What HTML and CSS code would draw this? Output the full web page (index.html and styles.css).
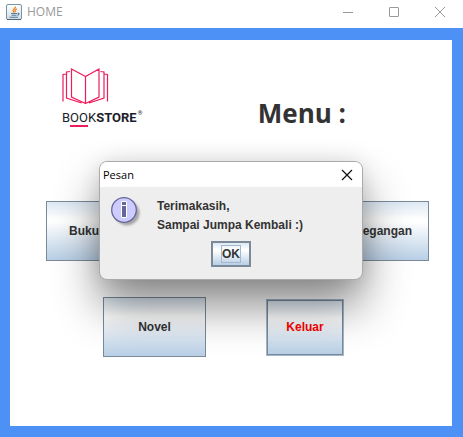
FILE: index.html
```
<!DOCTYPE html>
<html lang="id">
<head>
<meta charset="utf-8">
<meta name="viewport" content="width=device-width, initial-scale=1">
<title>HOME</title>
<link rel="stylesheet" href="styles.css">
</head>
<body>
<header class="titlebar">
  <svg class="app-icon" width="16" height="16" viewBox="0 0 16 16" aria-hidden="true">
    <defs><linearGradient id="tile" x1="0" y1="0" x2="0" y2="1"><stop offset="0" stop-color="#fff"/><stop offset="1" stop-color="#d3dde5"/></linearGradient></defs>
    <rect x=".5" y=".5" width="15" height="15" rx="1.5" fill="url(#tile)" stroke="#7893a6"/>
    <path d="M1 15.5h14" stroke="#48677f"/>
    <path d="M9.4 2.5c.7 2-3.4 2.7-2.2 4.6l.8 1.4M10.8 4.8C8.6 5.8 8.6 6.6 9.2 8.3" fill="none" stroke="#ee8420" stroke-width="1.3"/>
    <path d="M5 9.500h6M5.500 11.300h5M3.500 13.200h8.500M11.500 9.300c2-.6 2 1.500-.2 2" fill="none" stroke="#527b98" stroke-width="1.1"/>
  </svg>
  <span class="app-name">HOME</span>
  <div class="controls">
    <button type="button" class="control" aria-label="Minimize"><svg width="12" height="12" viewBox="0 0 12 12"><path d="M1 6.500h10"/></svg></button>
    <button type="button" class="control" aria-label="Maximize"><svg width="12" height="12" viewBox="0 0 12 12"><rect x="1.500" y="1.500" width="9" height="9" rx=".5"/></svg></button>
    <button type="button" class="control" aria-label="Close"><svg width="12" height="12" viewBox="0 0 12 12"><path d="M1 1l10 10M11 1L1 11"/></svg></button>
  </div>
</header>
<main class="frame">
  <div class="panel">
    <div class="heading">
      <div class="brand">
        <svg class="book" width="48" height="36" viewBox="0 0 48 36" aria-hidden="true">
          <path d="M23.500 8.500L9.500 1v28l14 6.500 13.500-6.500V1zM23.500 8.500v27M8 3.500l-3.500.5V30l15 5M38.500 3.500l3.500.5V30l-15 5M4 6l-3 .5V33.500M42.500 6l3 .5V33.500"/>
        </svg>
        <div class="wordmark"><span class="light">B<span class="underlined">OO</span>K</span><b>STORE</b><span class="reg">®</span></div>
      </div>
      <h1>Menu :</h1>
    </div>
    <div class="row row-top">
      <button type="button" class="tile tile-start">Buku</button>
      <button type="button" class="tile tile-end">Pegangan</button>
    </div>
    <div class="row row-bottom">
      <button type="button" class="tile">Novel</button>
      <button type="button" class="tile tile-exit">Keluar</button>
    </div>
  </div>
</main>
<section class="dialog" role="dialog" aria-labelledby="dialog-title">
  <header class="dialog-bar">
    <h2 id="dialog-title">Pesan</h2>
    <button type="button" class="dialog-close" aria-label="Close"><svg width="12" height="12" viewBox="0 0 12 12"><path d="M1 1l10 10M11 1L1 11"/></svg></button>
  </header>
  <div class="message">
    <svg class="info" width="32" height="32" viewBox="0 0 32 32" aria-hidden="true">
      <defs><filter id="soft" x="-20%" y="-20%" width="150%" height="150%"><feGaussianBlur stdDeviation="1.3"/></filter></defs>
      <circle cx="16" cy="16" r="12.5" fill="#777" opacity=".6" filter="url(#soft)"/>
      <circle cx="13" cy="13" r="12.3" fill="#ccf" stroke="#669" stroke-width="1.3"/>
      <path d="M10.500 4.500h5v4h-5zM10.500 8.500h5v12h-5z" fill="#669" stroke="#fff"/>
    </svg>
    <p>Terimakasih,<br>Sampai Jumpa Kembali :)</p>
  </div>
  <button type="button" class="ok"><span>OK</span></button>
</section>
</body>
</html>
```
FILE: styles.css
```
* {
  box-sizing: border-box;
}

body {
  display: flex;
  flex-direction: column;
  min-height: 100vh;
  margin: 0;
  background: #fff;
  color: #333;
  font-family: "Liberation Sans", Arial, sans-serif;
  font-size: 12px;
}

button {
  padding: 0;
  font: inherit;
  color: inherit;
}

svg {
  display: block;
}

.titlebar {
  display: flex;
  align-items: center;
  height: 28px;
  padding: 0 0 4px 6px;
}

.app-name {
  margin-left: 5px;
  color: #999;
  font: 12px/16px "Open Sans", "Segoe UI", sans-serif;
}

.controls {
  display: flex;
  margin-left: auto;
}

.control {
  display: grid;
  place-items: center;
  width: 46px;
  height: 24px;
  border: 0;
  background: none;
}

.control svg {
  fill: none;
  stroke: #999;
}

.frame {
  display: flex;
  flex: 1;
  padding: 12px 11px 11px 10px;
  background: #4d91f6;
}

.panel {
  flex: 1;
  background: #fff;
}

.heading {
  display: flex;
  justify-content: space-between;
  height: 161px;
  padding: 28px 106px 0 52px;
}

.book {
  fill: none;
  stroke: #ed1c5b;
  stroke-width: 1.2;
}

.wordmark {
  display: flex;
  margin-top: 6px;
  color: #1c1d2b;
  font: 13px/16px Roboto, sans-serif;
}

.light {
  font-weight: 400;
}

.underlined {
  display: inline-block;
  height: 17px;
  border-bottom: 2px solid #ed1c5b;
}

.reg {
  margin-left: 1px;
  font-size: 6px;
  line-height: 6px;
}

h1 {
  margin: 27px 0 0;
  font: bold 26px/36px "Open Sans", Calibri, sans-serif;
}

.row {
  display: flex;
  justify-content: space-between;
}

.row-top {
  padding: 0 23px 0 36px;
}

.row-bottom {
  align-items: center;
  padding: 36px 108px 0 93px;
}

.tile {
  width: 103px;
  height: 60px;
  border: 1px solid #7a8a99;
  background: linear-gradient(#dde8f3, #fff 30%, #fff 34%, #b8cfe5);
  font-weight: bold;
}

.tile-start {
  padding-left: 22px;
  text-align: left;
}

.tile-end {
  padding-right: 16px;
  text-align: right;
}

.tile-exit {
  width: 78px;
  height: 57px;
  border: 2px solid #7a8a99;
  outline: 1px solid #a3b8cc;
  outline-offset: -1px;
  color: #f00;
}

.dialog {
  position: absolute;
  top: 161px;
  left: 0;
  right: 1px;
  width: 264px;
  margin: 0 auto;
  padding-bottom: 12px;
  border: 1px solid #aaa;
  border-radius: 8px;
  background: #eee;
  box-shadow: 0 26px 46px rgba(0, 0, 0, 0.46), 0 0 20px rgba(0, 0, 0, 0.1);
}

.dialog-bar {
  display: flex;
  align-items: center;
  justify-content: space-between;
  height: 25px;
  padding: 0 9px 0 3px;
  border-radius: 7px 7px 0 0;
  background: #fff;
}

h2 {
  margin: 0;
  color: #000;
  font: 11px/16px "Open Sans", "Segoe UI", sans-serif;
}

.dialog-close {
  border: 0;
  background: none;
}

.dialog-close svg {
  fill: none;
  stroke: #111;
  stroke-width: 1.2;
}

.message {
  display: flex;
  gap: 14px;
  height: 54px;
  padding: 10px 10px 0 11px;
}

.message p {
  margin: 0;
  font-weight: bold;
  line-height: 19px;
}

.ok {
  display: block;
  width: 40px;
  height: 26px;
  margin: 0 auto;
  border: 2px solid #7a8a99;
  background: linear-gradient(#dde8f3, #fff 30%, #fff 34%, #b8cfe5);
  font-weight: bold;
}

.ok span {
  display: inline-block;
  border: 1px solid #a3b8cc;
  line-height: 16px;
}
```
